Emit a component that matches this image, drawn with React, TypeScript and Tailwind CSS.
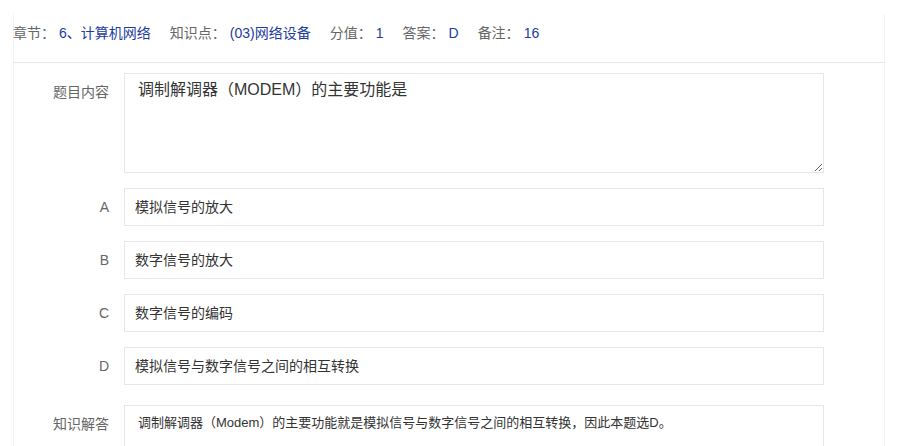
import React from "react";

const meta: [string, string][] = [
  ["章节：", "6、计算机网络"],
  ["知识点：", "(03)网络设备"],
  ["分值：", "1"],
  ["答案：", "D"],
  ["备注：", "16"],
];

const options: [string, string][] = [
  ["A", "模拟信号的放大"],
  ["B", "数字信号的放大"],
  ["C", "数字信号的编码"],
  ["D", "模拟信号与数字信号之间的相互转换"],
];

function Label({ children }: { children: React.ReactNode }) {
  return (
    <div className="w-[110px] shrink-0 pr-[15px] py-[9px] text-right leading-[20px] text-[14px] text-[#666]">
      {children}
    </div>
  );
}

export default function App() {
  return (
    <div className="h-[446px] overflow-hidden bg-white pt-[14px] font-['Liberation_Sans','Noto_Sans_CJK_SC',sans-serif]">
      <div className="mx-[13px] h-full border-x border-[#f3f3f3]">
        <div className="flex pt-[9px] pb-[19px] leading-[20px] text-[14px] border-b border-[#e8e8e8] -mx-px">
          {meta.map(([k, v]) => (
            <span key={k} className="mr-[19px] whitespace-nowrap">
              <span className="text-[#666]">{k}</span>
              <span className="ml-[4px] text-[#1c3c9f]">{v}</span>
            </span>
          ))}
        </div>
        <div className="pt-[10px]">
          <div className="flex mb-[15px]">
            <Label>题目内容</Label>
            <textarea
              readOnly
              defaultValue="调制解调器（MODEM）的主要功能是"
              className="block w-[700px] h-[100px] border border-[#e6e6e6] bg-white pl-[13px] pr-[10px] py-[6px] text-[16px] leading-[20px] text-[#333] outline-none"
            />
          </div>
          {options.map(([k, v], i) => (
            <div key={k} className={i === options.length - 1 ? "flex mb-[20px]" : "flex mb-[15px]"}>
              <Label>{k}</Label>
              <div className="w-[700px] h-[38px] border border-[#e6e6e6] bg-white px-[10px] flex items-center text-[14px] text-[#333]">
                {v}
              </div>
            </div>
          ))}
          <div className="flex">
            <Label>知识解答</Label>
            <textarea
              readOnly
              defaultValue="调制解调器（Modem）的主要功能就是模拟信号与数字信号之间的相互转换，因此本题选D。"
              className="block w-[700px] h-[100px] border border-[#e6e6e6] bg-white pl-[13px] pr-[10px] pt-[7px] text-[13px] leading-[20px] text-[#333] outline-none"
            />
          </div>
        </div>
      </div>
    </div>
  );
}
